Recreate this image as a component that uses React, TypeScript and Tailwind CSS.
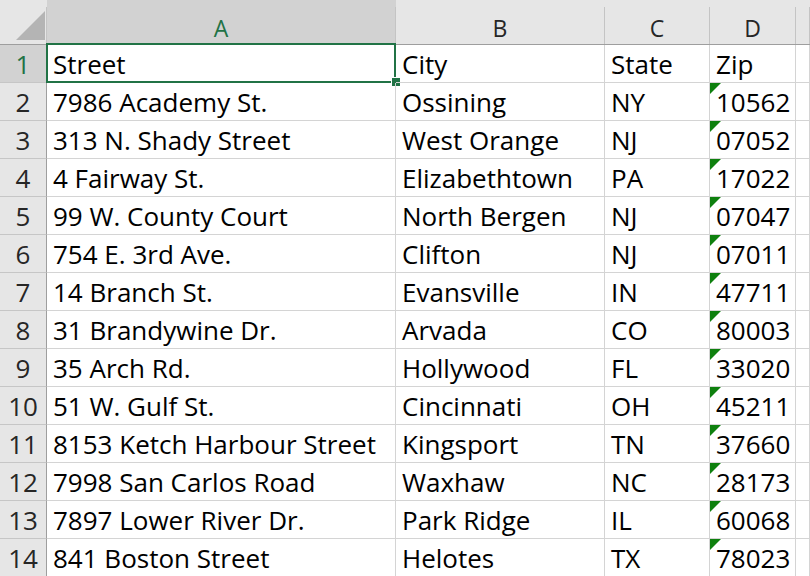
import React from "react"

const rows: [string, string, string, string][] = [
  ["7986 Academy St.", "Ossining", "NY", "10562"],
  ["313 N. Shady Street", "West Orange", "NJ", "07052"],
  ["4 Fairway St.", "Elizabethtown", "PA", "17022"],
  ["99 W. County Court", "North Bergen", "NJ", "07047"],
  ["754 E. 3rd Ave.", "Clifton", "NJ", "07011"],
  ["14 Branch St.", "Evansville", "IN", "47711"],
  ["31 Brandywine Dr.", "Arvada", "CO", "80003"],
  ["35 Arch Rd.", "Hollywood", "FL", "33020"],
  ["51 W. Gulf St.", "Cincinnati", "OH", "45211"],
  ["8153 Ketch Harbour Street", "Kingsport", "TN", "37660"],
  ["7998 San Carlos Road", "Waxhaw", "NC", "28173"],
  ["7897 Lower River Dr.", "Park Ridge", "IL", "60068"],
  ["841 Boston Street", "Helotes", "TX", "78023"],
]

const font = { fontFamily: '"Open Sans", "Liberation Sans", sans-serif' }

function ColHead({ label, selected }: { label: string; selected?: boolean }) {
  return (
    <div className={`h-[45px] flex flex-col border-b border-[#9e9e9e] ${selected ? "bg-[#d2d2d2]" : "bg-[#e6e6e6]"}`}>
      <div className="h-[7px]" />
      <div
        className={`flex-1 flex items-center justify-center border-r border-[#c4c4c4] text-[23px] leading-none pt-[5px] ${
          selected ? "text-[#217346]" : "text-[#262626]"
        }`}
      >
        {label}
      </div>
    </div>
  )
}

function RowHead({ n, selected }: { n: number; selected?: boolean }) {
  return (
    <div
      className={`h-[38px] flex items-center justify-center border-b border-r border-b-[#c6c6c6] border-r-[#9e9e9e] text-[26px] leading-[38px] ${
        selected ? "bg-[#d2d2d2] text-[#217346]" : "bg-[#e6e6e6] text-[#262626]"
      }`}
    >
      {n}
    </div>
  )
}

function Cell({ children, flag, sel }: { children?: React.ReactNode; flag?: boolean; sel?: boolean }) {
  return (
    <div className="relative h-[38px] border-b border-r border-[#d4d4d4] pl-[6px] text-[26px] leading-[38px] text-black whitespace-nowrap">
      {children}
      {flag && (
        <svg className="absolute left-0 top-0" width="11" height="11" viewBox="0 0 11 11">
          <polygon points="0,0 11,0 0,11" fill="#0e800e" />
        </svg>
      )}
      {sel && (
        <>
          <div className="absolute left-[-1px] top-[-2px] right-[-1px] bottom-[-1px] border-2 border-[#217346]" />
          <div className="absolute right-[-6px] bottom-[-5px] w-[10px] h-[10px] bg-[#217346] border border-white" />
        </>
      )}
    </div>
  )
}

export default function App() {
  return (
    <div className="w-[810px] h-[576px] overflow-hidden bg-white" style={font}>
      <div className="grid grid-cols-[47px_349px_209px_105px_86px_1fr]">
        <div className="relative h-[45px] bg-[#e6e6e6] border-b border-[#9e9e9e] flex flex-col">
          <div className="h-[7px]" />
          <div className="flex-1 border-r border-[#c4c4c4]" />
          <svg className="absolute left-[16px] top-[11px]" width="29" height="29" viewBox="0 0 29 29">
            <polygon points="29,0 29,29 0,29" fill="#b4b4b4" />
          </svg>
        </div>
        <ColHead label="A" selected />
        <ColHead label="B" />
        <ColHead label="C" />
        <ColHead label="D" />
        <ColHead label="" />

        <RowHead n={1} selected />
        <Cell sel>Street</Cell>
        <Cell>City</Cell>
        <Cell>State</Cell>
        <Cell>Zip</Cell>
        <Cell />

        {rows.map((r, i) => (
          <React.Fragment key={i}>
            <RowHead n={i + 2} />
            <Cell>{r[0]}</Cell>
            <Cell>{r[1]}</Cell>
            <Cell>{r[2]}</Cell>
            <Cell flag>{r[3]}</Cell>
            <Cell />
          </React.Fragment>
        ))}
      </div>
    </div>
  )
}
